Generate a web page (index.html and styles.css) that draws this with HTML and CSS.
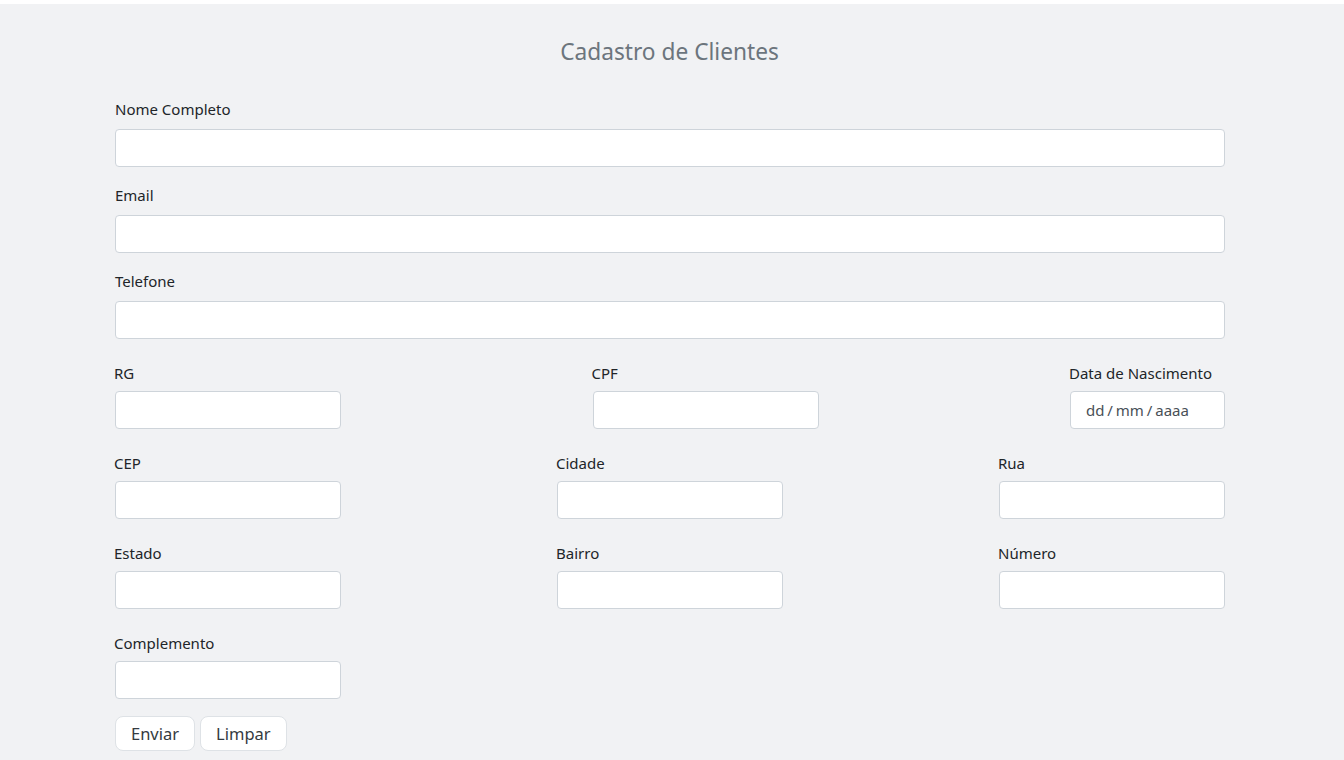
FILE: index.html
```html
<!DOCTYPE html>
<html lang="pt-BR">
<head>
<meta charset="utf-8">
<title>Cadastro de Clientes</title>
<link rel="stylesheet" href="styles.css">
</head>
<body>
<div class="page">
  <h2 class="title">Cadastro de Clientes</h2>
  <form class="form">
    <div class="group">
      <label class="label">Nome Completo</label>
      <input class="input" type="text">
    </div>
    <div class="group">
      <label class="label">Email</label>
      <input class="input" type="text">
    </div>
    <div class="group">
      <label class="label">Telefone</label>
      <input class="input" type="text">
    </div>
    <div class="row">
      <div class="field"><label class="label">RG</label><input class="input small" type="text"></div>
      <div class="field"><label class="label">CPF</label><input class="input small" type="text"></div>
      <div class="field"><label class="label">Data de Nascimento</label><input class="input date" type="text" placeholder="dd / mm / aaaa"></div>
    </div>
    <div class="row">
      <div class="field"><label class="label">CEP</label><input class="input small" type="text"></div>
      <div class="field"><label class="label">Cidade</label><input class="input small" type="text"></div>
      <div class="field"><label class="label">Rua</label><input class="input small" type="text"></div>
    </div>
    <div class="row">
      <div class="field"><label class="label">Estado</label><input class="input small" type="text"></div>
      <div class="field"><label class="label">Bairro</label><input class="input small" type="text"></div>
      <div class="field"><label class="label">Número</label><input class="input small" type="text"></div>
    </div>
    <div class="row">
      <div class="field"><label class="label">Complemento</label><input class="input small" type="text"></div>
    </div>
    <div class="actions">
      <button class="btn" type="submit">Enviar</button>
      <button class="btn" type="reset">Limpar</button>
    </div>
  </form>
</div>
</body>
</html>
```
FILE: styles.css
```css
html, body {
  margin: 0;
  padding: 0;
  background: #ffffff;
}
body {
  font-family: "Noto Sans", "Open Sans", sans-serif;
  color: #212529;
}
.page {
  margin-top: 4px;
  background: #f1f2f4;
  min-height: 756px;
  padding-top: 33px;
  box-sizing: border-box;
}
.title {
  margin: 0;
  padding-right: 5px;
  text-align: center;
  font-size: 22.7px;
  line-height: 29px;
  font-weight: 400;
  color: #6c757d;
}
.form {
  width: 1110px;
  margin: 31px 0 0 115px;
}
.group {
  display: flex;
  flex-direction: column;
  margin-bottom: 16px;
}
.label {
  display: block;
  font-size: 15px;
  line-height: 24px;
  margin-bottom: 8px;
  color: #212529;
}
.input {
  box-sizing: border-box;
  height: 38px;
  border: 1px solid #ced4da;
  border-radius: 4px;
  background: #ffffff;
  font-family: inherit;
  font-size: 15px;
  padding: 0 15px;
  color: #495057;
  outline: none;
}
.group .input {
  width: 100%;
}
.row {
  display: flex;
  justify-content: space-between;
  margin-top: 22px;
}
.row .label {
  margin-bottom: 6px;
  margin-left: -1px;
}
.field {
  display: flex;
  flex-direction: column;
}
.small {
  width: 226px;
}
.date {
  width: 155px;
  word-spacing: -1px;
}
.date::placeholder {
  color: #495057;
  opacity: 1;
}
.actions {
  display: flex;
  gap: 5px;
  margin-top: 17px;
}
.btn {
  box-sizing: border-box;
  height: 35px;
  padding: 0 15px;
  background: #ffffff;
  border: 1px solid #dee2e6;
  border-radius: 8px;
  font-family: inherit;
  font-size: 16.5px;
  color: #343a40;
}
```
